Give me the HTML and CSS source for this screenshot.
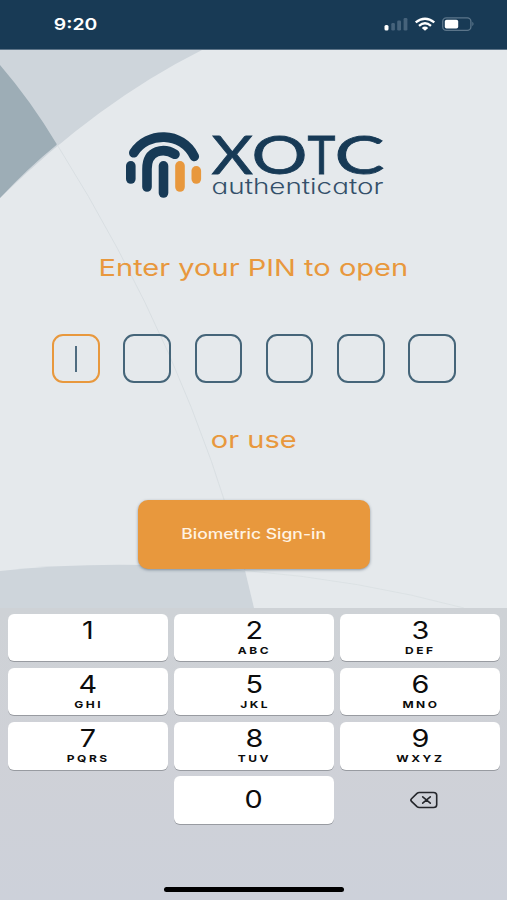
FILE: index.html
```
<!DOCTYPE html>
<html lang="en">
<head>
    <meta charset="UTF-8">
    <meta name="viewport" content="width=device-width, initial-scale=1.0">
    <title>XOTC authenticator</title>
    <link rel="stylesheet" href="styles.css">
</head>
<body>
    <header class="status-bar">
        <span class="clock wide">9:20</span>
        <svg class="status-icons" width="92" height="16" viewBox="0 0 92 16">
            <!-- signal -->
            <rect x="0.5" y="9" width="4" height="5.5" rx="1.5" fill="#fff"/>
            <g fill="#46637b">
                <rect x="7.3" y="7" width="3.6" height="7.5" rx="1.2"/>
                <rect x="13.2" y="4.5" width="3.8" height="10" rx="1.2"/>
                <rect x="19.6" y="2" width="3.8" height="12.5" rx="1.2"/>
            </g>
            <!-- wifi -->
            <g fill="none" stroke="#fff" stroke-width="2.3">
                <path d="M31.7 6.4Q41 -1 50.3 6.4"/>
                <path d="M35 9.8Q41 4.8 47 9.8"/>
            </g>
            <path d="M37.8 11.9Q41 9.3 44.2 11.9L41 14.8Z" fill="#fff"/>
            <!-- battery -->
            <rect x="58.7" y="1.8" width="28.2" height="12.6" rx="3.6" fill="none" stroke="#5b758a" stroke-width="1.3"/>
            <rect x="60.8" y="3.8" width="13.4" height="8.8" rx="1.8" fill="#fff"/>
            <path d="M88.3 5.8Q90.8 8 88.3 10.2Z" fill="#5b758a"/>
        </svg>
    </header>

    <main class="screen">
        <svg class="backdrop" width="507" height="558" viewBox="0 50 507 558">
            <path d="M0 50H202Q98 102 0 198Z" fill="#ced5db"/>
            <path d="M0 65Q31 101 57 144.5Q28 168 0 198Z" fill="#9dadb6"/>
            <path d="M0 571Q110 559 245 570.5L254 608H0Z" fill="#ced5db"/>
            <path d="M57 144.5Q187 351 245 570.5" fill="none" stroke="#d6dce0" stroke-width="0.8"/>
            <path d="M245 570.5Q360 580 464 608" fill="none" stroke="#d9dfe2" stroke-width="0.8"/>
        </svg>

        <svg class="logo" width="262" height="70" viewBox="122 130 262 70">
            <g fill="none" stroke="#173a56" stroke-width="9.6" stroke-linecap="round">
                <path d="M132.8 152.8C146 131.5 181 131 193.3 156.5"/>
                <path d="M146 187V169C146 149.5 163 147.5 174 154.3"/>
                <path d="M129.8 165.8V179"/>
                <path d="M162.5 165.8V193"/>
            </g>
            <g fill="none" stroke="#e8983d" stroke-width="9.6" stroke-linecap="round">
                <path d="M179 165.8V187"/>
                <path d="M195.3 170.8V179"/>
            </g>
            <text class="logo-name" y="174"><tspan x="210.5" textLength="41.5" lengthAdjust="spacingAndGlyphs">X</tspan><tspan x="250.5" textLength="56" lengthAdjust="spacingAndGlyphs">O</tspan><tspan x="306.5" textLength="28" lengthAdjust="spacingAndGlyphs">T</tspan><tspan x="333.5" textLength="50" lengthAdjust="spacingAndGlyphs">C</tspan></text>
            <text class="logo-sub" x="210.5" y="194" textLength="172" lengthAdjust="spacingAndGlyphs">authenticator</text>
        </svg>

        <h1 class="prompt wide">Enter your PIN to open</h1>

        <div class="pin">
            <div class="pin-box active"><span class="caret"></span></div>
            <div class="pin-box"></div>
            <div class="pin-box"></div>
            <div class="pin-box"></div>
            <div class="pin-box"></div>
            <div class="pin-box"></div>
        </div>

        <p class="prompt or wide">or use</p>

        <button class="biometric"><span class="wide">Biometric Sign-in</span></button>
    </main>

    <section class="keypad">
        <div class="keys">
            <button class="key"><span class="num">1</span></button>
            <button class="key"><span class="num">2</span><span class="abc">ABC</span></button>
            <button class="key"><span class="num">3</span><span class="abc">DEF</span></button>
            <button class="key"><span class="num">4</span><span class="abc">GHI</span></button>
            <button class="key"><span class="num">5</span><span class="abc">JKL</span></button>
            <button class="key"><span class="num">6</span><span class="abc">MNO</span></button>
            <button class="key"><span class="num">7</span><span class="abc">PQRS</span></button>
            <button class="key"><span class="num">8</span><span class="abc">TUV</span></button>
            <button class="key"><span class="num">9</span><span class="abc">WXYZ</span></button>
            <span></span>
            <button class="key zero"><span class="num">0</span></button>
            <button class="key delete" aria-label="Delete">
                <svg width="30" height="20" viewBox="0 0 30 20" fill="none" stroke="#24262b" stroke-width="1.6" stroke-linejoin="round" stroke-linecap="round">
                    <path d="M10.3 2.5H24.5Q27.7 2.5 27.7 5.3V14.7Q27.7 17.5 24.5 17.5H10.3Q9 17.5 8 16.6L2.5 11.3Q1.2 10 2.5 8.7L8 3.4Q9 2.5 10.3 2.5Z"/>
                    <path d="M13.7 6.8L21.3 13.2M21.3 6.8L13.7 13.2"/>
                </svg>
            </button>
        </div>
        <div class="home-bar"></div>
    </section>
</body>
</html>
```

FILE: styles.css
```
* {
    box-sizing: border-box;
}
body {
    margin: 0;
    width: 507px;
    height: 900px;
    overflow: hidden;
    font-family: Inter, 'Liberation Sans', sans-serif;
    background-color: #cdd1da;
}
button {
    border: none;
    padding: 0;
    font-family: inherit;
    cursor: pointer;
}
/* Wide lettering */
.wide {
    display: inline-block;
    transform: scaleX(1.235);
}
.status-bar {
    display: flex;
    justify-content: space-between;
    height: 50px;
    padding: 16px 31px 0 58px;
    background-color: #183a55;
    border-bottom: 1px solid #5d7488;
}
.clock {
    font-size: 15.7px;
    line-height: 17px;
    font-weight: 600;
    color: #fff;
}
.screen {
    position: relative;
    display: flex;
    flex-direction: column;
    align-items: center;
    height: 558px;
    padding-top: 80px;
    background-color: #e5e9ec;
}
.backdrop {
    position: absolute;
    left: 0;
    top: 0;
}
.logo,
.prompt,
.pin,
.biometric {
    position: relative;
}
.logo {
    flex: none;
    overflow: visible;
}
.logo-name {
    font-family: Lato, sans-serif;
    font-size: 52.5px;
    fill: #173a56;
    stroke: #173a56;
    stroke-width: 0.8px;
}
.logo-sub {
    font-size: 21.5px;
    font-weight: 300;
    font-feature-settings: "cv11";
    fill: #34506a;
}
.prompt {
    margin: 53px 0 0;
    font-size: 23.5px;
    line-height: 30px;
    font-weight: 400;
    white-space: nowrap;
    color: #e8983d;
}
.pin {
    display: flex;
    gap: 23.6px;
    margin: 51px 0 0 1px;
}
.pin-box {
    display: flex;
    align-items: center;
    justify-content: center;
    width: 47.6px;
    height: 49px;
    border: 2px solid #456579;
    border-radius: 11px;
}
.pin-box.active {
    border-color: #e8983d;
}
.caret {
    width: 2px;
    height: 26px;
    background-color: #4f6c80;
}
.prompt.or {
    margin-top: 42px;
}
.biometric {
    width: 232px;
    height: 68.5px;
    margin-top: 45px;
    padding-bottom: 2px;
    border-radius: 10px;
    background-color: #e8983d;
    box-shadow: 0 1px 3px rgba(60, 80, 100, 0.55);
    font-size: 14.2px;
    font-weight: 500;
    color: #fff3e3;
}
.keypad {
    display: flex;
    flex-direction: column;
    align-items: center;
    height: 292px;
    padding: 5.5px 0 0 1px;
    background: linear-gradient(#ced2d6, #cfd1d7 50%, #cdd1da);
}
.keys {
    display: grid;
    grid-template-columns: repeat(3, 159.7px);
    grid-auto-rows: 47.7px;
    gap: 6.5px;
}
.key {
    display: flex;
    flex-direction: column;
    align-items: center;
    padding-top: 4px;
    border-radius: 6px;
    background-color: #fff;
    box-shadow: 0 1px 0.5px #989ba1;
    color: #0c0c0c;
}
.num {
    font-size: 24px;
    line-height: 25px;
    transform: scaleX(1.2);
}
.abc {
    margin-top: 2px;
    padding-left: 1px;
    font-size: 9.6px;
    line-height: 11px;
    font-weight: 700;
    letter-spacing: 2px;
    transform: scaleX(1.25);
}
.key.zero {
    padding-top: 11px;
}
.key.delete {
    justify-content: center;
    padding: 0 0 0 7px;
    background: none;
    box-shadow: none;
}
.home-bar {
    width: 180px;
    height: 5px;
    margin-top: 63px;
    border-radius: 3px;
    background-color: #000;
}
```
